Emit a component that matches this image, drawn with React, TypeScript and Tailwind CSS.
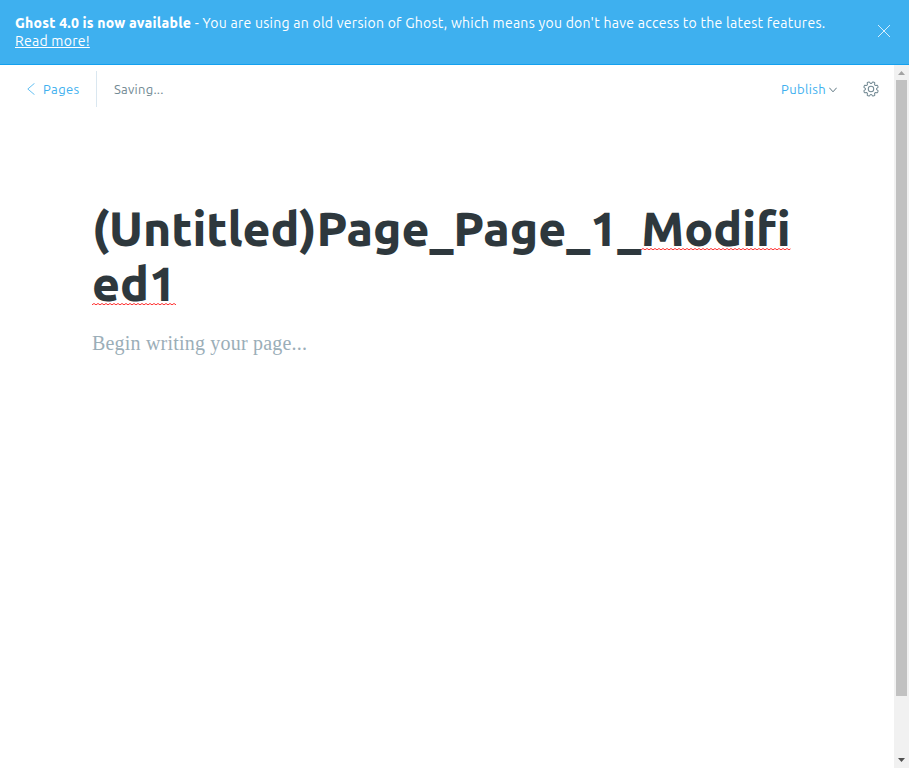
import React from 'react';

const ui = "font-['Ubuntu','Noto_Sans',sans-serif]";

function Squiggle({ className, id }: { className: string; id: string }) {
  return (
    <svg className={`absolute h-[3px] ${className}`} aria-hidden="true">
      <defs>
        <pattern id={id} width="4" height="3" patternUnits="userSpaceOnUse">
          <path d="M-1 1.1 L0 1.8 L2 0.5 L4 1.8 L5 1.1" fill="none" stroke="#ff1818" strokeWidth="0.9" />
        </pattern>
      </defs>
      <rect width="100%" height="3" fill={`url(#${id})`} />
    </svg>
  );
}

function Gear() {
  const pts: string[] = [];
  for (let i = 0; i < 8; i++) {
    const a = (i * Math.PI) / 4 - Math.PI / 2;
    const p = (r: number, d: number) => `${(8.5 + r * Math.cos(a + d)).toFixed(2)} ${(8.5 + r * Math.sin(a + d)).toFixed(2)}`;
    pts.push(`${i ? 'L' : 'M'}${p(6.1, -0.12)} Q${p(5.7, 0)} ${p(6.1, 0.12)} L${p(7.7, 0.23)} Q${p(8.3, 0.39)} ${p(7.7, 0.55)}`);
  }
  return (
    <svg className="h-4 w-4" viewBox="0 0 17 17" fill="none" stroke="#738a94" strokeWidth="1.1">
      <path d={pts.join(' ') + ' Z'} strokeLinejoin="round" />
      <circle cx="8.5" cy="8.5" r="2.9" />
    </svg>
  );
}

export default function App() {
  return (
    <div className={`flex h-screen flex-col overflow-hidden bg-white ${ui}`}>
      <aside className="flex h-[65px] shrink-0 items-start justify-between border-b border-[#14a0ee] bg-[#3eb0ef] pl-[15px] pr-[19px] text-white">
        <p className="mt-[14px] whitespace-nowrap text-[14px] leading-[18px] tracking-[0.27px]">
          <b className="font-extrabold tracking-[0.2px]">Ghost 4.0 is now available</b>
          <span> - You are using an old version of Ghost, which means you don't have access to the latest features.</span>
          <br />
          <a className="underline">Read more!</a>
        </p>
        <svg className="mt-[25px] h-3 w-3" viewBox="0 0 12 12" stroke="white" strokeWidth="0.8">
          <path d="M0 0 L12 12 M12 0 L0 12" />
        </svg>
      </aside>
      <div className="flex min-h-0 flex-1">
        <main className="flex min-w-0 flex-1 flex-col">
          <header className="flex h-[48px] items-center pl-[27px] pr-[15px] text-[13px] tracking-[0.3px]">
            <svg className="h-3 w-2" viewBox="0 0 8 12" fill="none" stroke="#3eb0ef" strokeWidth="0.8">
              <path d="M7.5 0.3 L0.8 6 L7.5 11.7" />
            </svg>
            <a className="ml-2 w-[53px] pt-[2px] tracking-[0.4px] text-[#3eb0ef]">Pages</a>
            <div className="h-9 w-px bg-[#dae7f0]" />
            <span className="ml-[17px] pt-[2px] tracking-[0.25px] text-[#738a94]">Saving...</span>
            <a className="ml-auto pt-[2px] tracking-[0.35px] text-[#3eb0ef]">Publish</a>
            <svg className="ml-[3px] mt-[2px] h-[6px] w-2" viewBox="0 0 8 6" fill="none" stroke="#5f7883" strokeWidth="1">
              <path d="M0.3 0.7 L4 4.8 L7.7 0.7" />
            </svg>
            <div className="ml-[26px]"><Gear /></div>
          </header>
          <section className="ml-[92px] mt-[88px]">
            <h1 className="whitespace-nowrap text-[48px] font-extrabold leading-[55px] tracking-[-0.05px] text-[#2e383d]">
              <span className="block"><span>(Untitled)</span><span>Page_Page_1_</span><span className="relative inline-block">Modifi<Squiggle id="wave-a" className="left-0 top-[47px] w-full" /></span></span>
              <span className="relative block w-[84px]">ed1<Squiggle id="wave-b" className="left-0 top-[47px] w-full" /></span>
            </h1>
            <p className="mt-[17px] font-['Liberation_Serif',serif] text-[20px] leading-[30px] tracking-[0.2px] text-[#9baeb8]">Begin writing your page...</p>
          </section>
        </main>
        <div className="flex w-[15px] shrink-0 flex-col items-center bg-[#f1f1f1]">
          <svg className="h-[15px] w-[15px] shrink-0"><path d="M4 10 L7.5 6 L11 10 Z" fill="#a3a3a3" /></svg>
          <div className="h-[616px] w-[11px] bg-[#c1c1c1]" />
          <svg className="mt-auto h-[14px] w-[15px] shrink-0"><path d="M4 4 L7.5 8 L11 4 Z" fill="#505050" /></svg>
        </div>
      </div>
    </div>
  );
}
